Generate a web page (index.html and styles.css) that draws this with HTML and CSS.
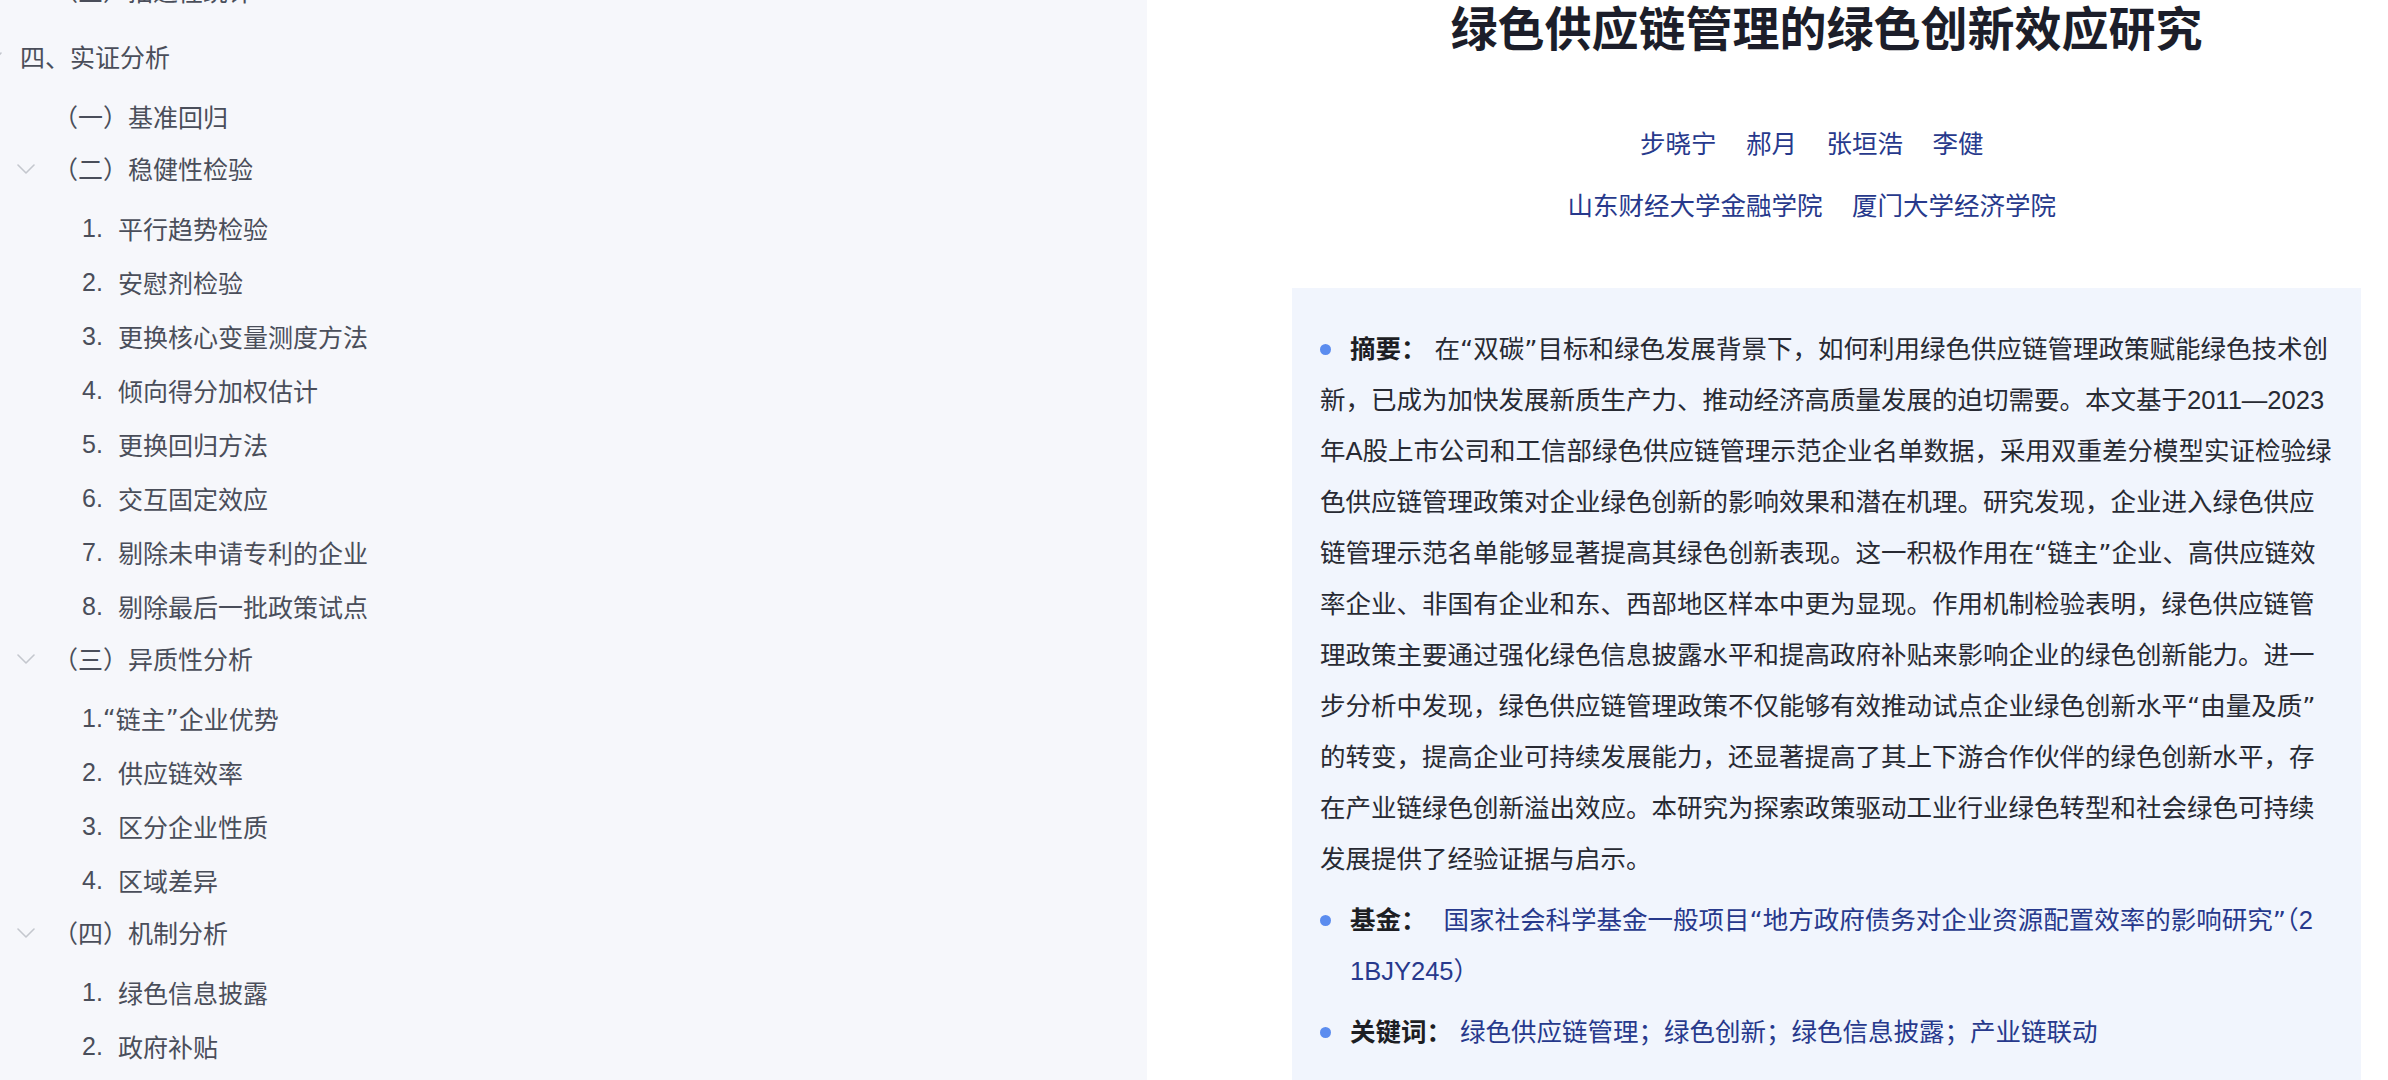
FILE: index.html
```html
<!DOCTYPE html>
<html lang="zh-CN">
<head>
<meta charset="utf-8">
<title>绿色供应链管理的绿色创新效应研究</title>
<link rel="stylesheet" href="styles.css">
</head>
<body>
<div class="page">
  <aside class="sidebar">
    <ul class="toc">
      <li class="row leaf l2 first">（三）描述性统计</li>
      <li class="row head l1">
        <svg class="chev" viewBox="0 0 18 10" width="18" height="10"><polyline points="1,1 9,9 17,1"/></svg>
        <span>四、实证分析</span>
      </li>
      <li class="row leaf l2">（一）基准回归</li>
      <li class="row head l2">
        <svg class="chev" viewBox="0 0 18 10" width="18" height="10"><polyline points="1,1 9,9 17,1"/></svg>
        <span>（二）稳健性检验</span>
      </li>
      <li class="row leaf l3"><span class="num">1.</span>平行趋势检验</li>
      <li class="row leaf l3"><span class="num">2.</span>安慰剂检验</li>
      <li class="row leaf l3"><span class="num">3.</span>更换核心变量测度方法</li>
      <li class="row leaf l3"><span class="num">4.</span>倾向得分加权估计</li>
      <li class="row leaf l3"><span class="num">5.</span>更换回归方法</li>
      <li class="row leaf l3"><span class="num">6.</span>交互固定效应</li>
      <li class="row leaf l3"><span class="num">7.</span>剔除未申请专利的企业</li>
      <li class="row leaf l3"><span class="num">8.</span>剔除最后一批政策试点</li>
      <li class="row head l2">
        <svg class="chev" viewBox="0 0 18 10" width="18" height="10"><polyline points="1,1 9,9 17,1"/></svg>
        <span>（三）异质性分析</span>
      </li>
      <li class="row leaf l3">1.<span class="q">“</span>链主<span class="q">”</span>企业优势</li>
      <li class="row leaf l3"><span class="num">2.</span>供应链效率</li>
      <li class="row leaf l3"><span class="num">3.</span>区分企业性质</li>
      <li class="row leaf l3"><span class="num">4.</span>区域差异</li>
      <li class="row head l2">
        <svg class="chev" viewBox="0 0 18 10" width="18" height="10"><polyline points="1,1 9,9 17,1"/></svg>
        <span>（四）机制分析</span>
      </li>
      <li class="row leaf l3"><span class="num">1.</span>绿色信息披露</li>
      <li class="row leaf l3"><span class="num">2.</span>政府补贴</li>
    </ul>
  </aside>
  <main class="main">
    <h1 class="title">绿色供应链管理的绿色创新效应研究</h1>
    <p class="authors"><span class="name">步晓宁</span><span class="name">郝月</span><span class="name">张垣浩</span><span class="name">李健</span></p>
    <p class="affils"><span class="name">山东财经大学金融学院</span><span class="name">厦门大学经济学院</span></p>
    <section class="abstract">
      <p class="item summary"><span class="dot"></span><b class="label">摘要：</b>在<span class="q">“</span>双碳<span class="q">”</span>目标和绿色发展背景下，如何利用绿色供应链管理政策赋能绿色技术创新，已成为加快发展新质生产力、推动经济高质量发展的迫切需要。本文基于2011—2023年A股上市公司和工信部绿色供应链管理示范企业名单数据，采用双重差分模型实证检验绿色供应链管理政策对企业绿色创新的影响效果和潜在机理。研究发现，企业进入绿色供应链管理示范名单能够显著提高其绿色创新表现。这一积极作用在<span class="q">“</span>链主<span class="q">”</span>企业、高供应链效率企业、非国有企业和东、西部地区样本中更为显现。作用机制检验表明，绿色供应链管理政策主要通过强化绿色信息披露水平和提高政府补贴来影响企业的绿色创新能力。进一步分析中发现，绿色供应链管理政策不仅能够有效推动试点企业绿色创新水平<span class="q">“</span>由量及质<span class="q">”</span>的转变，提高企业可持续发展能力，还显著提高了其上下游合作伙伴的绿色创新水平，存在产业链绿色创新溢出效应。本研究为探索政策驱动工业行业绿色转型和社会绿色可持续发展提供了经验证据与启示。</p>
      <div class="item hang">
        <span class="dotbox"><span class="dot"></span></span>
        <p class="body fund"><b class="label">基金：</b><span class="link pad">国家社会科学基金一般项目<span class="q">“</span>地方政府债务对企业资源配置效率的影响研究<span class="q">”</span>（21BJY245）</span></p>
      </div>
      <div class="item hang">
        <span class="dotbox"><span class="dot"></span></span>
        <p class="body"><b class="label">关键词：</b><span class="link">绿色供应链管理；绿色创新；绿色信息披露；产业链联动</span></p>
      </div>
    </section>
  </main>
</div>
</body>
</html>
```

FILE: styles.css
```css
html, body {
  margin: 0;
  padding: 0;
  background: #ffffff;
}
body {
  font-family: "Liberation Sans", "Noto Sans CJK SC", sans-serif;
  width: 2388px;
  height: 1080px;
  overflow: hidden;
}
.page {
  display: flex;
  height: 1080px;
  overflow: hidden;
}
.q {
  font-family: "DejaVu Sans", "Noto Sans CJK SC", sans-serif;
}

/* ---------- sidebar ---------- */
.sidebar {
  width: 1147px;
  flex: none;
  background: #f6f7fb;
  overflow: hidden;
}
.toc {
  list-style: none;
  margin: 0;
  padding: 0;
  font-size: 25px;
  color: #4a4e5a;
}
.row {
  display: flex;
  align-items: center;
  white-space: nowrap;
  box-sizing: border-box;
}
.leaf {
  height: 54px;
}
.head {
  height: 58px;
  padding-bottom: 8px;
}
.first {
  margin-top: -37px;
}
.head.l1 {
  margin-top: 14px;
  padding-left: 0;
}
.head.l1 .chev {
  margin-left: -16px;
  margin-right: 18px;
}
.head.l2 {
  padding-left: 17px;
}
.head.l2 .chev {
  margin-right: 18px;
}
.leaf.l2 {
  padding-left: 53px;
}
.leaf.l3 {
  padding-left: 82px;
}
.num {
  display: inline-block;
  width: 36px;
}
.chev {
  flex: none;
  fill: none;
  stroke: #c4c7ce;
  stroke-width: 1.6;
  stroke-linecap: round;
  stroke-linejoin: round;
  margin-top: 2px;
}

/* ---------- main ---------- */
.main {
  flex: 1;
  padding: 0 27px 0 145px;
  box-sizing: border-box;
}
.title {
  margin: 0;
  font-size: 47px;
  line-height: 60px;
  font-weight: 700;
  color: #1c1e2a;
  text-align: center;
  white-space: nowrap;
}
.authors, .affils {
  margin: 0;
  text-align: center;
  font-size: 25.5px;
  line-height: 40px;
  color: #27398c;
}
.authors {
  margin-top: 64px;
}
.affils {
  margin-top: 22px;
}
.name {
  margin-right: 29.5px;
}

.abstract {
  margin-top: 62px;
  background: #f1f5fd;
  padding: 36px 25px 80px 28px;
  font-size: 25.5px;
  line-height: 51px;
  color: #282a33;
}
.item {
  margin: 0 0 10px 0;
}
.dot {
  display: inline-block;
  width: 11px;
  height: 11px;
  border-radius: 50%;
  background: #5b8cef;
  vertical-align: middle;
  margin-right: 19px;
  position: relative;
  top: -2px;
}
.label {
  font-weight: 700;
  color: #1d1e24;
  margin-right: 8px;
}
.hang {
  display: flex;
  align-items: flex-start;
}
.dotbox {
  flex: none;
  width: 30px;
  height: 51px;
  display: flex;
  align-items: center;
}
.dotbox .dot {
  margin-right: 0;
  top: 0;
}
.body {
  flex: 1;
  margin: 0;
}
.fund {
  word-break: break-all;
  padding-right: 20px;
}
.link {
  color: #27398c;
}
.pad {
  padding-left: 9px;
}
```
